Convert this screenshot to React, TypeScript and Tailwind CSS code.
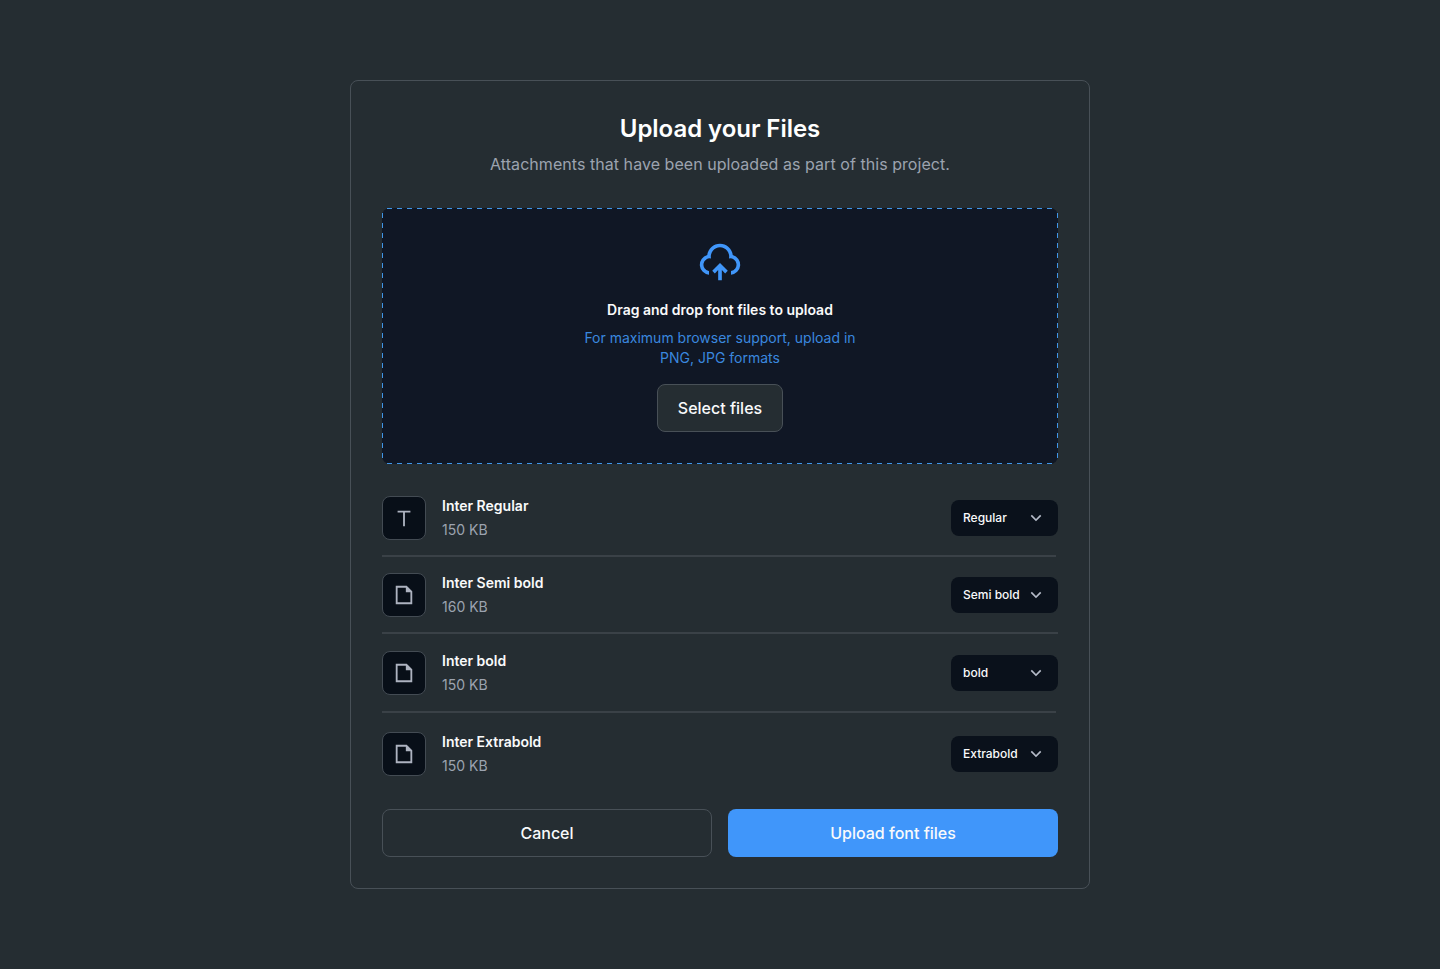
import React from "react";

type FontFile = {
  name: string;
  size: string;
  weight: string;
  kind: "type" | "file";
  spacing: string;
  divider?: string;
};

const files: FontFile[] = [
  { name: "Inter Regular", size: "150 KB", weight: "Regular", kind: "type", spacing: "pb-[15px]", divider: "w-[674px]" },
  { name: "Inter Semi bold", size: "160 KB", weight: "Semi bold", kind: "file", spacing: "pt-4 pb-[15px]", divider: "w-[676px]" },
  { name: "Inter bold", size: "150 KB", weight: "bold", kind: "file", spacing: "pt-[17px] pb-4", divider: "w-[674px]" },
  { name: "Inter Extrabold", size: "150 KB", weight: "Extrabold", kind: "file", spacing: "pt-[19px]" },
];

const kindPaths = {
  type: "M13 6v15h-2V6H5V4h14v2z",
  file: "M3 2h12l6 6v14H3zM19 9h-5V4H5v16h14z",
};

function CloudIcon() {
  return (
    <svg viewBox="0 0 24 24" className="h-11 w-11 fill-[#4096fa]" aria-hidden="true">
      <path d="M12 12.586l4.243 4.242-1.415 1.415L13 16.415V22h-2v-5.587l-1.828 1.83-1.415-1.415L12 12.586zM12 2a7.001 7.001 0 0 1 6.954 6.194A5.5 5.5 0 0 1 18 18.978v-2.014a3.5 3.5 0 1 0-1.111-6.91 5 5 0 1 0-9.777 0 3.5 3.5 0 0 0-1.292 6.88l.18.03v2.014a5.5 5.5 0 0 1-.954-10.784A7 7 0 0 1 12 2z" />
    </svg>
  );
}

function FileRow({ file }: { file: FontFile }) {
  return (
    <li className="flex flex-col">
      <div className={`flex items-start ${file.spacing}`}>
        <div className="flex h-11 w-11 shrink-0 items-center justify-center rounded-lg border border-[#434b53] bg-[#080f18]">
          <svg viewBox="0 0 24 24" className="h-[22px] w-[22px] fill-[#adb3c0]" aria-hidden="true">
            <path fillRule="evenodd" d={kindPaths[file.kind]} />
          </svg>
        </div>
        <div className="ml-4 h-11 flex-1">
          <p className="text-sm leading-5 font-semibold text-[#f9fafb]">{file.name}</p>
          <p className="mt-1 text-sm leading-5 text-[#9ca3af]">{file.size}</p>
        </div>
        <button className="mt-1 flex h-9 w-[107px] items-center justify-between rounded-lg bg-[#0a111b] px-3 text-xs font-medium text-[#f9fafb]">
          {file.weight}
          <svg viewBox="0 0 24 24" className="h-5 w-5 fill-[#b5bbc8]" aria-hidden="true">
            <path d="M12 13.172l4.95-4.95 1.414 1.414L12 16 5.636 9.636 7.05 8.222z" />
          </svg>
        </button>
      </div>
      {file.divider && <div className={`h-0.5 bg-[#3a4147] ${file.divider}`} />}
    </li>
  );
}

export default function App() {
  return (
    <main className="flex h-[969px] w-full items-start justify-center bg-[#252d32] pt-20 font-['Inter',sans-serif]">
      <section className="flex h-[809px] w-[740px] flex-col rounded-lg border border-[#485057] px-[31px] pt-8">
        <h1 className="text-center text-2xl leading-8 font-semibold tracking-[-0.05px] text-white">Upload your Files</h1>
        <p className="mt-[7px] text-center text-base leading-6 tracking-[0.05px] text-[#9ca3af]">
          Attachments that have been uploaded as part of this project.
        </p>
        <div className="relative mt-8 flex h-64 shrink-0 flex-col items-center rounded-lg bg-[#101725] pt-8">
          <svg viewBox="0 0 676 256" className="absolute inset-0 h-full w-full" aria-hidden="true">
            <path
              d="M5 .5H671M675.5 5V251M5 255.5H671M.5 5V251"
              fill="none"
              stroke="#4096e8"
              strokeWidth="1"
              strokeDasharray="5 5"
            />
          </svg>
          <CloudIcon />
          <h2 className="mt-4 text-sm leading-5 font-semibold text-[#f9fafb]">Drag and drop font files to upload</h2>
          <p className="mt-2 w-[280px] text-center text-sm leading-5 text-[#3a87df]">
            For maximum browser support, upload in PNG, JPG formats
          </p>
          <button className="mt-4 h-12 w-[126px] rounded-lg border border-[#485057] bg-[#252d32] text-base font-medium text-[#f9fafb]">
            Select files
          </button>
        </div>
        <ul className="mt-8 flex flex-col">
          {files.map((file) => (
            <FileRow key={file.name} file={file} />
          ))}
        </ul>
        <div className="mt-[33px] grid grid-cols-2 gap-4">
          <button className="h-12 rounded-lg border border-[#485057] text-base font-medium text-[#f9fafb]">Cancel</button>
          <button className="h-12 rounded-lg bg-[#4096fa] text-base font-medium text-[#f9fafb]">Upload font files</button>
        </div>
      </section>
    </main>
  );
}
